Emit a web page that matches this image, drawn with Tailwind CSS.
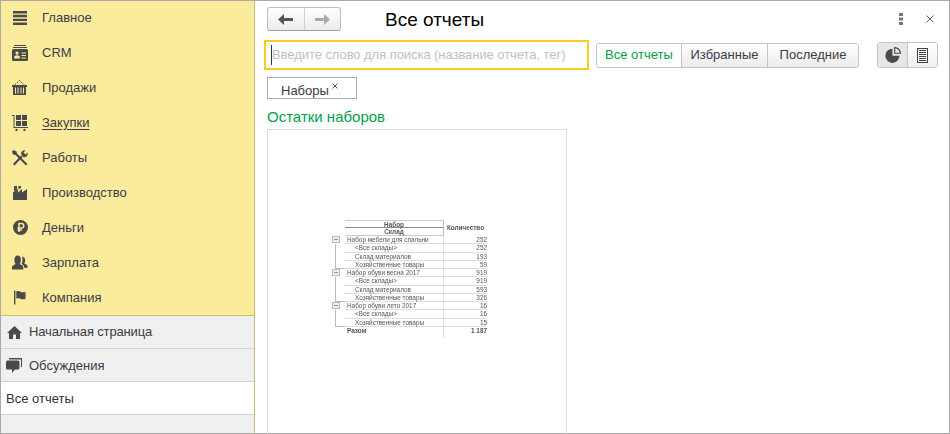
<!DOCTYPE html>
<html>
  <head>
    <meta charset="UTF-8" />
    <title>Все отчеты</title>
    <script src="https://cdn.jsdelivr.net/npm/@tailwindcss/browser@4"></script>
  </head>

  <body class="w-[950px] h-[434px] overflow-hidden bg-white font-['Liberation_Sans',sans-serif] text-[13px] text-[#3d3a45]">
    <div class="flex h-full border border-[#a9a9a9]">
      <!-- Sidebar -->
      <aside class="flex flex-col w-[254px] shrink-0 bg-[#f0f0f0] border-r border-[#c9b96a]">
        <nav class="flex flex-col h-[315px] bg-[#fbec9d] border-b border-[#cdbc6c]">
          <a class="flex items-center h-[34px]">
            <svg class="w-[14px] h-[14px] ml-[12px] mr-[15px]" viewBox="0 0 15 14" preserveAspectRatio="none" fill="#4a4a4a"><path d="M0 0h15v2.400H0zM0 3.800h15v2.400H0zM0 7.700h15v2.400H0zM0 11.600h15V14H0z"/></svg>
            <span>Главное</span>
          </a>
          <a class="flex items-center h-[35px]">
            <svg class="w-[16px] h-[16px] ml-[11px] mr-[14px]" viewBox="0 0 16 16" fill="#4a4a4a"><path d="M2 0h12v1H2zM1 2h14v1H1z"/><path fill-rule="evenodd" d="M1.500 4h13A1.500 1.500 0 0 1 16 5.500v9a1.500 1.500 0 0 1-1.500 1.500h-13A1.500 1.500 0 0 1 0 14.500v-9A1.500 1.500 0 0 1 1.500 4zM5 6.500a1.600 1.600 0 1 0 0 3.200 1.600 1.600 0 0 0 0-3.200zM2 13.500h6c0-2-1-3.200-3-3.200s-3 1.200-3 3.200zM9.500 7.500V8.500H14V7.500zM9.500 10V11H14V10zM9.500 12.500v1H14v-1z"/></svg>
            <span>CRM</span>
          </a>
          <a class="flex items-center h-[35px]">
            <svg class="w-[15px] h-[15px] ml-[11px] mr-[15px]" viewBox="0 0 15 15" fill="#4a4a4a"><path fill-rule="evenodd" d="M0 5h15v2h-1v8H1V7H0zM3 7.500V13.500h1V7.500zM5.500 7.500V13.500h1V7.500zM8.500 7.500V13.500h1V7.500zM11 7.500V13.500h1V7.500z"/><path d="M2.500 5 7.500 0.500 12.500 5" fill="none" stroke="#4a4a4a" stroke-dasharray="2 1"/></svg>
            <span>Продажи</span>
          </a>
          <a class="flex items-center h-[35px]">
            <svg class="w-[16px] h-[16px] ml-[11px] mr-[14px]" viewBox="0 0 16 16" fill="#4a4a4a"><path d="M0 0h2.500v12H16v1H1.500V1H0z"/><path d="M4 0h5v5H4zM10 0h5v5h-5zM4 6h5v5H4zM10 6h5v5h-5z"/><circle cx="4.500" cy="15" r="1.200"/><circle cx="12.500" cy="15" r="1.200"/></svg>
            <span class="underline underline-offset-2">Закупки</span>
          </a>
          <a class="flex items-center h-[35px]">
            <svg class="w-[16px] h-[16px] ml-[11px] mr-[14px]" viewBox="0 0 16 16" fill="#4a4a4a"><path d="M1 14 9 5.500l1.500 1.500L2.500 15.500z"/><path d="M15.500 14 14 15.500 3.500 5 1 4.500 0 1.500 1.500 0 4.500 1.500 5 3.500z"/><path d="M9 4a3.500 3.500 0 0 1 4.500-3.500L11.500 2.500l2 2 2-2A3.500 3.500 0 0 1 11 7z"/></svg>
            <span>Работы</span>
          </a>
          <a class="flex items-center h-[35px]">
            <svg class="w-[14px] h-[14px] ml-[12px] mr-[15px]" viewBox="0 0 14 14" fill="#4a4a4a"><path d="M0 14V6.500L5 3v3.500L9 3v3.500L14 3v11zM1 0h3v3.500L1 5.500zM5.500 0h2.500v2L5.500 3.500z"/></svg>
            <span>Производство</span>
          </a>
          <a class="flex items-center h-[35px]">
            <svg class="w-[15px] h-[15px] ml-[12px] mr-[14px]" viewBox="0 0 15 15"><circle cx="7.500" cy="7.500" r="7.500" fill="#4a4a4a"/><path d="M6 12V3.500h2.500a2 2 0 0 1 0 4.500H4.500M4.500 10h4.500" fill="none" stroke="#fbec9d" stroke-width="1.500"/></svg>
            <span>Деньги</span>
          </a>
          <a class="flex items-center h-[35px]">
            <svg class="w-[16px] h-[15px] ml-[11px] mr-[14px]" viewBox="0 0 17 15" fill="#4a4a4a"><path d="M0 15v-2.500c0-2 2.500-2.500 3.800-3.500C2.800 7.500 2.500 6 2.500 4.500 2.500 2 3.800 0 6 0s3.500 2 3.500 4.500c0 1.500-.3 3-1.300 4.500 1.300 1 3.800 1.500 3.800 3.500V15z"/><path d="M11 1.500c1.800 0 3 1.500 3 3.500 0 1.200-.3 2.400-1 3.500 1.200.8 3.500 1.200 3.500 3V13h-3.500c0-2-1.500-3-3-3.800 1-1.500 1.200-3.200 1.200-4.700 0-1-.2-2-.7-3z"/></svg>
            <span>Зарплата</span>
          </a>
          <a class="flex items-center h-[35px]">
            <svg class="w-[12px] h-[15px] ml-[13px] mr-[16px]" viewBox="0 0 13 15" fill="#4a4a4a"><path d="M0 0h1.500v15H0zM2.500 1C4.500 0 6 .8 7.500 1.500c1.500.5 3 .5 5 0V9c-2 .8-3.500.5-5 0-1.500-.8-3-1.200-5-.3z"/></svg>
            <span>Компания</span>
          </a>
        </nav>
        <a class="flex items-center h-[33px] border-b border-[#d3d3d3]">
          <svg class="w-[15px] h-[13px] ml-[6px] mr-[7px]" viewBox="0 0 15 13" fill="#4a4a4a"><path d="M7.500 0 15 7h-2v6H9V8.500H6V13H2V7H0z"/></svg>
          <span class="tracking-[-0.15px]">Начальная страница</span>
        </a>
        <a class="flex items-center h-[33px] border-b border-[#d3d3d3]">
          <svg class="w-[16px] h-[15px] ml-[5px] mr-[7px]" viewBox="0 0 16 15" fill="#4a4a4a"><path d="M3 0h13v9h-1V1.500H3z"/><path d="M1.500 2.500h10.500A1.500 1.500 0 0 1 13.500 4v6a1.500 1.500 0 0 1-1.500 1.500H9L6 15v-3.500H1.500A1.500 1.500 0 0 1 0 10V4a1.500 1.500 0 0 1 1.500-1.500z"/></svg>
          <span class="mt-[1px]">Обсуждения</span>
        </a>
        <a class="flex items-center h-[33px] pl-[5px] pt-[1px] bg-white border-b border-[#d3d3d3] text-[#333]">Все отчеты</a>
      </aside>

      <!-- Main -->
      <main class="flex-1 min-w-0 pl-[12px] pt-[6px]">
        <header class="flex items-center h-[24px]">
          <div class="flex w-[74px] h-[24px] rounded-[3px] border border-[#bdbdbd] border-b-[#a0a0a0] bg-linear-to-b from-white to-[#ececec]">
            <button class="flex flex-1 items-center justify-center border-r border-[#d0d0d0]">
              <svg class="w-[15px] h-[11px]" viewBox="0 0 15 11" fill="#555"><path d="M0 5.500 6 0v4h9v3H6v4z"/></svg>
            </button>
            <button class="flex flex-1 items-center justify-center">
              <svg class="w-[15px] h-[11px]" viewBox="0 0 15 11" fill="#aaa"><path d="M15 5.500 9 0v4H0v3h9v4z"/></svg>
            </button>
          </div>
          <h1 class="ml-[44px] mt-[2px] text-[19px] leading-[26px] text-black">Все отчеты</h1>
          <svg class="w-[4px] h-[12px] ml-auto" viewBox="0 0 4 12" fill="#777"><path d="M0 0h4v3H0zM0 4.500h4v3H0zM0 9h4v3H0z"/></svg>
          <svg class="w-[8px] h-[8px] ml-[23px] mr-[15px]" viewBox="0 0 8 8" stroke="#666" fill="none"><path d="M.5.5l7 7M7.500.5l-7 7"/></svg>
        </header>

        <div class="flex items-center mt-[9px] -ml-[3px]">
          <div class="flex items-center w-[325px] h-[30px] border-2 border-[#fccb1c] pl-[5px] whitespace-nowrap">
            <span class="w-px h-[20px] bg-[#333]"></span>
            <span class="text-[#c3bec3] tracking-[-0.06px]">Введите слово для поиска (название отчета, тег)</span>
          </div>
          <div class="flex h-[25px] ml-[7px] rounded-[3px] border border-[#c4c4c4] overflow-hidden">
            <span class="flex items-center justify-center w-[85px] bg-white text-[#00a04b] border-r border-[#c4c4c4]">Все отчеты</span>
            <span class="flex items-center justify-center w-[86px] bg-linear-to-b from-white to-[#ececec] border-r border-[#c4c4c4]">Избранные</span>
            <span class="flex items-center justify-center w-[90px] bg-linear-to-b from-white to-[#ececec]">Последние</span>
          </div>
          <div class="flex h-[26px] ml-[18px] rounded-[3px] border border-[#c4c4c4] overflow-hidden">
            <span class="flex items-center justify-center w-[30px] bg-[#e6e6e6] border-r border-[#c4c4c4]">
              <svg class="w-[16px] h-[16px]" viewBox="0 0 14 14" fill="#4a4a4a"><path d="M6.500 1.500a6.200 6.200 0 1 0 6.200 6.200H6.500z"/><path fill="none" stroke="#4a4a4a" d="M8.500.5a5 5 0 0 1 5 5h-5z"/></svg>
            </span>
            <span class="flex items-center justify-center w-[29px] bg-linear-to-b from-white to-[#f0f0f0]">
              <svg class="w-[11px] h-[15px]" viewBox="0 0 11 15" fill="none" stroke="#444"><rect x=".5" y=".5" width="10" height="14"/><path d="M2 2.500h7M2 4.500h7M2 6.500h7M2 8.500h7M2 10.500h7M2 12.500h7"/></svg>
            </span>
          </div>
        </div>

        <div class="flex items-center w-[90px] h-[22px] mt-[7px] border border-[#a9a9a9] pl-[13px] relative">
          <span class="mt-[5px]">Наборы</span>
          <svg class="absolute left-[64px] top-[5px] w-[6px] h-[6px]" viewBox="0 0 6 6" stroke="#555" fill="none"><path d="M.5.5l5 5M5.500.5l-5 5"/></svg>
        </div>

        <h2 class="mt-[7px] text-[15px] leading-[22px] text-[#00a04b]">Остатки наборов</h2>

        <!-- Report preview -->
        <section class="w-[300px] h-[320px] mt-[1px] border border-[#dcdcdc] pt-[90px] pl-[64px] text-[6.400px] text-[#555] leading-[8.250px]">
          <div class="blur-[0.3px]">
            <div class="flex w-[155px]">
              <div class="w-[13px]"></div>
              <div class="w-[98px] text-center font-bold border-t border-b border-[#ccc]">
                <div class="h-[7px] leading-[7px] border-b border-[#888]">Набор</div>
                <div class="h-[7px] leading-[7px]">Склад</div>
              </div>
              <div class="w-[44px] flex items-center justify-center font-bold border-l border-[#bbb]">Количество</div>
            </div>
            <div class="flex w-[155px] h-[8.250px]"><div class="w-[13px]"><div class="flex items-center justify-center w-[8px] h-[7px] border border-[#bbb] bg-[#eee]"><div class="w-[4px] h-px bg-[#999]"></div></div></div><div class="flex-1 pl-[2px] border-b border-[#ddd]">Набор мебели для спальни</div><div class="w-[44px] text-right border-l border-b border-[#ddd]">252</div></div>
            <div class="flex w-[155px] h-[8.250px]"><div class="w-[13px]"><div class="w-[4px] h-full border-r border-[#bbb]"></div></div><div class="flex-1 pl-[10px] border-b border-[#ddd]">&lt;Все склады&gt;</div><div class="w-[44px] text-right border-l border-b border-[#ddd]">252</div></div>
            <div class="flex w-[155px] h-[8.250px]"><div class="w-[13px]"><div class="w-[4px] h-full border-r border-[#bbb]"></div></div><div class="flex-1 pl-[10px] border-b border-[#ddd]">Склад материалов</div><div class="w-[44px] text-right border-l border-b border-[#ddd]">193</div></div>
            <div class="flex w-[155px] h-[8.250px]"><div class="w-[13px]"><div class="ml-[3px] h-full border-l border-b border-[#bbb]"></div></div><div class="flex-1 pl-[10px] border-b border-[#ddd]">Хозяйственные товары</div><div class="w-[44px] text-right border-l border-b border-[#ddd]">59</div></div>
            <div class="flex w-[155px] h-[8.250px]"><div class="w-[13px]"><div class="flex items-center justify-center w-[8px] h-[7px] border border-[#bbb] bg-[#eee]"><div class="w-[4px] h-px bg-[#999]"></div></div></div><div class="flex-1 pl-[2px] border-b border-[#ddd]">Набор обуви весна 2017</div><div class="w-[44px] text-right border-l border-b border-[#ddd]">919</div></div>
            <div class="flex w-[155px] h-[8.250px]"><div class="w-[13px]"><div class="w-[4px] h-full border-r border-[#bbb]"></div></div><div class="flex-1 pl-[10px] border-b border-[#ddd]">&lt;Все склады&gt;</div><div class="w-[44px] text-right border-l border-b border-[#ddd]">919</div></div>
            <div class="flex w-[155px] h-[8.250px]"><div class="w-[13px]"><div class="w-[4px] h-full border-r border-[#bbb]"></div></div><div class="flex-1 pl-[10px] border-b border-[#ddd]">Склад материалов</div><div class="w-[44px] text-right border-l border-b border-[#ddd]">593</div></div>
            <div class="flex w-[155px] h-[8.250px]"><div class="w-[13px]"><div class="ml-[3px] h-full border-l border-b border-[#bbb]"></div></div><div class="flex-1 pl-[10px] border-b border-[#ddd]">Хозяйственные товары</div><div class="w-[44px] text-right border-l border-b border-[#ddd]">326</div></div>
            <div class="flex w-[155px] h-[8.250px]"><div class="w-[13px]"><div class="flex items-center justify-center w-[8px] h-[7px] border border-[#bbb] bg-[#eee]"><div class="w-[4px] h-px bg-[#999]"></div></div></div><div class="flex-1 pl-[2px] border-b border-[#ddd]">Набор обуви лето 2017</div><div class="w-[44px] text-right border-l border-b border-[#ddd]">16</div></div>
            <div class="flex w-[155px] h-[8.250px]"><div class="w-[13px]"><div class="w-[4px] h-full border-r border-[#bbb]"></div></div><div class="flex-1 pl-[10px] border-b border-[#ddd]">&lt;Все склады&gt;</div><div class="w-[44px] text-right border-l border-b border-[#ddd]">16</div></div>
            <div class="flex w-[155px] h-[8.250px]"><div class="w-[13px]"><div class="ml-[3px] h-full border-l border-b border-[#bbb]"></div></div><div class="flex-1 pl-[10px] border-b border-[#ddd]">Хозяйственные товары</div><div class="w-[44px] text-right border-l border-b border-[#ddd]">15</div></div>
            <div class="flex w-[155px] h-[11px] font-bold"><div class="w-[13px]"></div><div class="flex-1 pl-[2px]">Разом</div><div class="w-[44px] text-right border-l border-[#ddd]">1 187</div></div>
          </div>
        </section>
      </main>
    </div>
  </body>
</html>
